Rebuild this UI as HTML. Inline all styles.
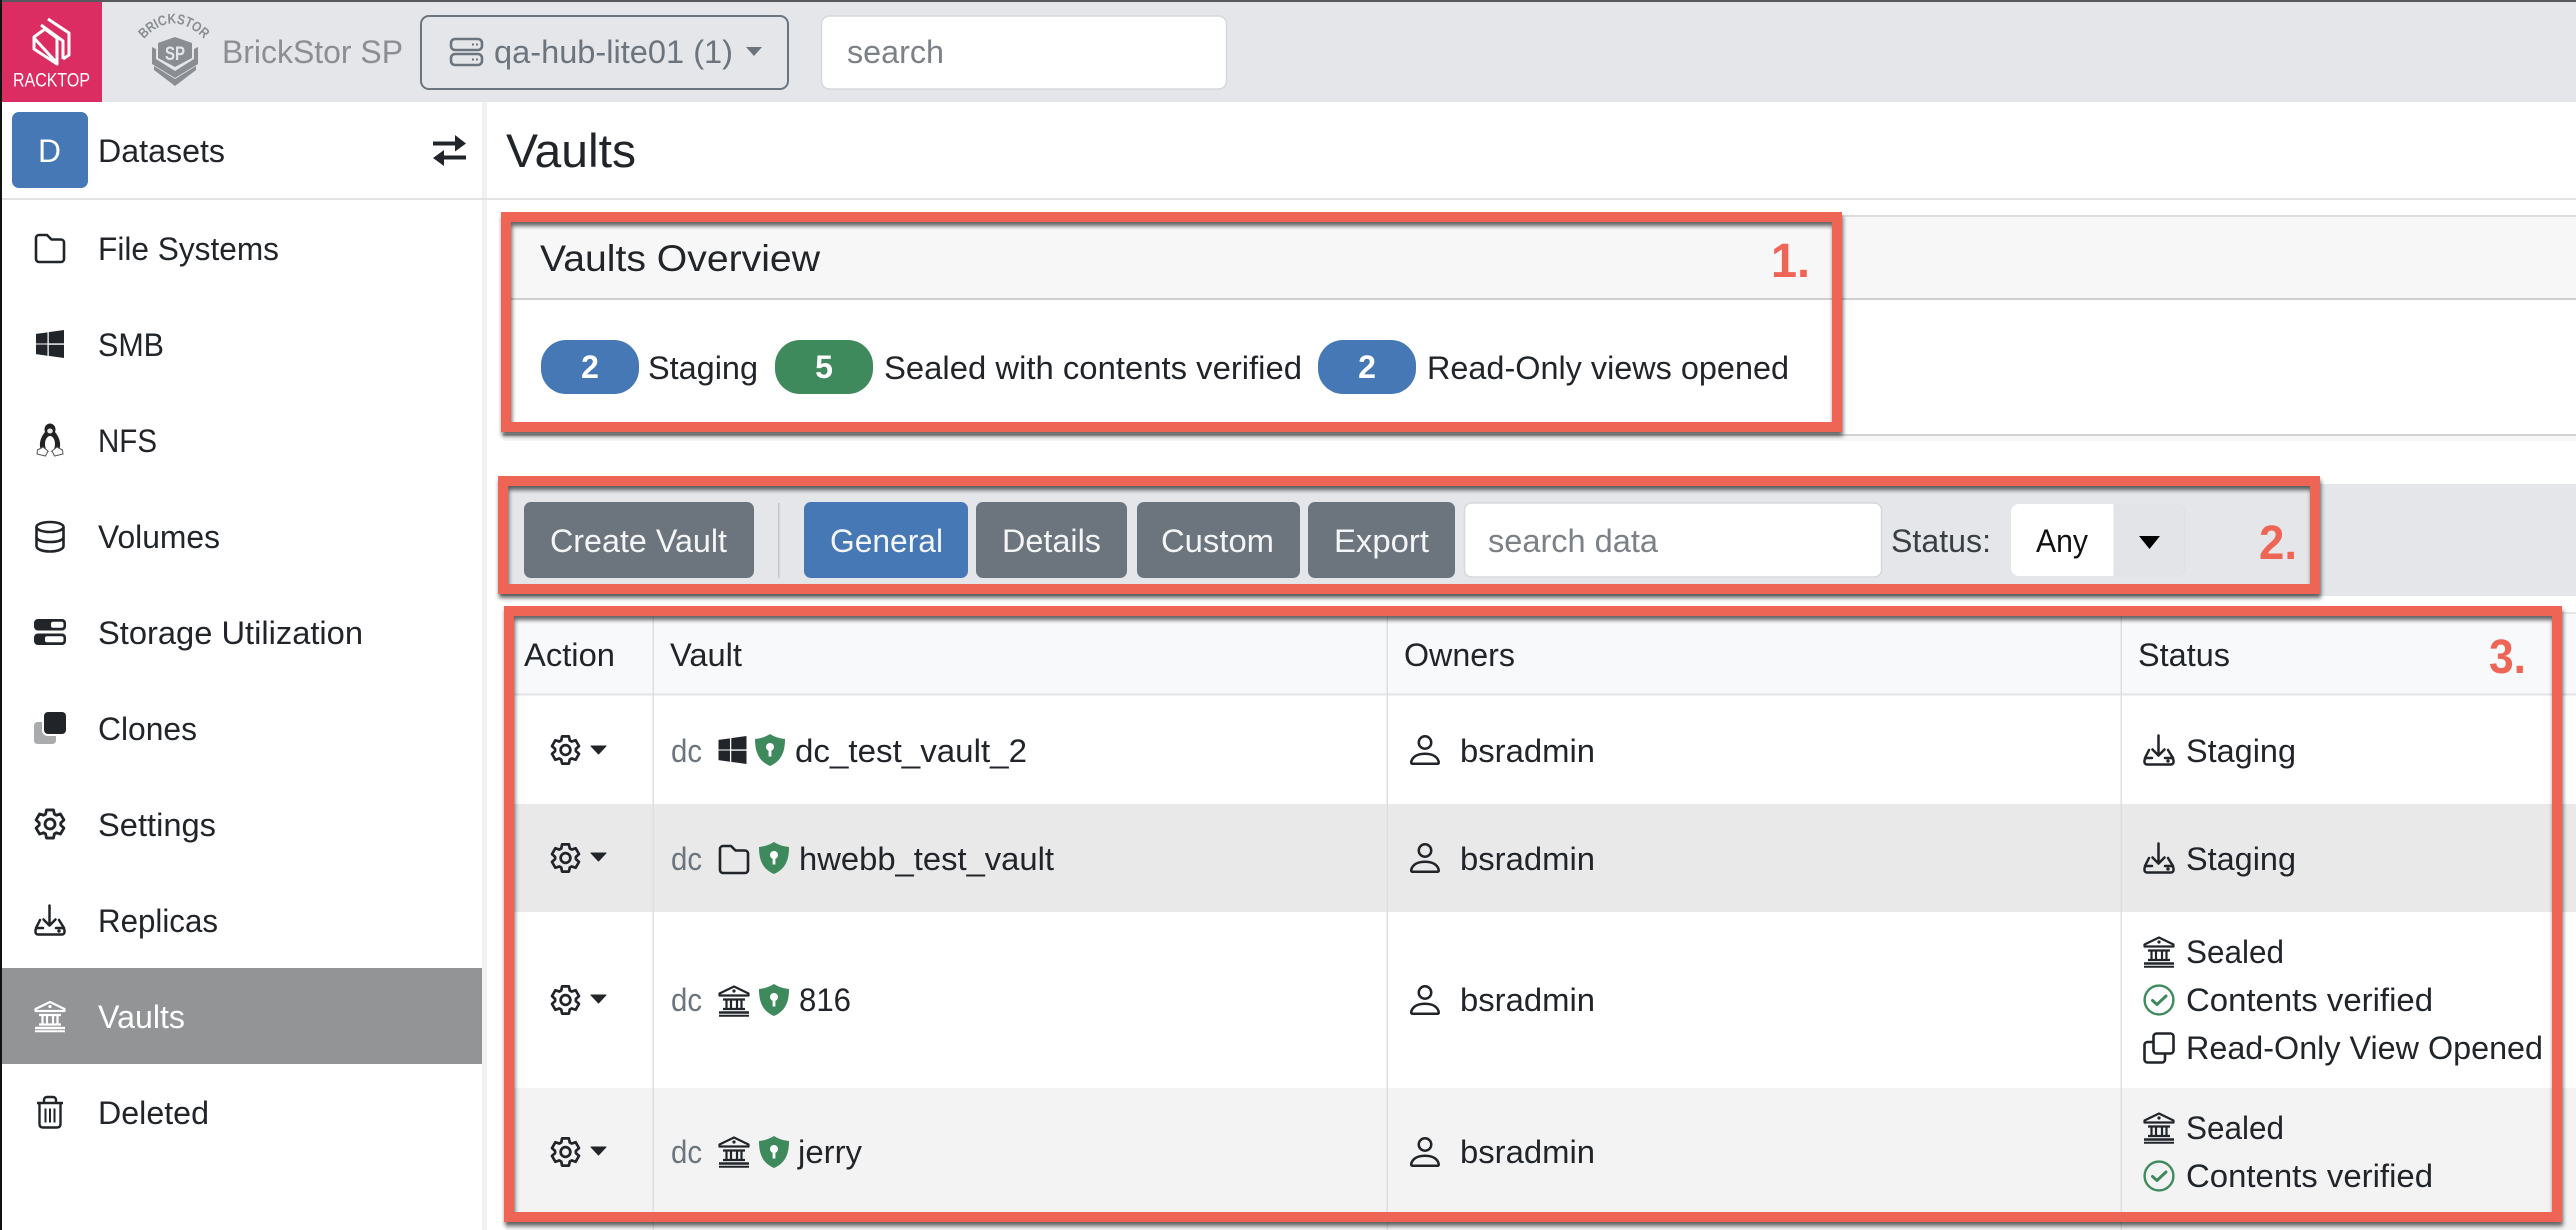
<!DOCTYPE html>
<html lang="en">
<head>
<meta charset="utf-8">
<title>Vaults - BrickStor SP</title>
<style>
html,body{margin:0;padding:0;width:2576px;height:1230px;overflow:hidden;background:#fff}
svg.page{display:block;position:absolute;left:0;top:0}
text{font-family:"Liberation Sans",sans-serif;font-size:32px;fill:#212529}
.w{fill:#fff}.m{fill:#6c757d}.ph{fill:#7b8187}.h{fill:#8b8e92}.wb{fill:#fff;font-weight:700}
.num{fill:#ee6555;font-weight:700;font-size:48px}
</style>
</head>
<body>
<svg class="page" xmlns="http://www.w3.org/2000/svg" width="2576" height="1230" viewBox="0 0 2576 1230">
<defs>
<symbol id="folder" viewBox="0 0 32 32"><path fill="none" stroke="currentColor" stroke-width="2.600" stroke-linejoin="round" d="M2 27V6A3 3 0 0 1 5 3H13L17.500 7.500H27A3 3 0 0 1 30 10.500V27A3 3 0 0 1 27 30H5A3 3 0 0 1 2 27Z"/></symbol>
<symbol id="win" viewBox="0 0 16 16"><path fill="currentColor" d="M6.555 1.375 0 2.237v5.45h6.555V1.375zM0 13.795l6.555.933V8.313H0v5.482zm7.278-5.4.026 6.378L16 16V8.395H7.278zM16 0 7.3 1.244v6.414H16V0z"/></symbol>
<symbol id="person" viewBox="0 0 16 16"><path fill="currentColor" d="M8 8a3 3 0 1 0 0-6 3 3 0 0 0 0 6Zm2-3a2 2 0 1 1-4 0 2 2 0 0 1 4 0Zm4 8c0 1-1 1-1 1H3s-1 0-1-1 1-4 6-4 6 3 6 4Zm-1-.004c-.001-.246-.154-.986-.832-1.664C11.516 10.68 10.289 10 8 10c-2.29 0-3.516.68-4.168 1.332-.678.678-.83 1.418-.832 1.664h10Z"/></symbol>
<symbol id="gear" viewBox="0 0 32 32"><g fill="none" stroke="currentColor" stroke-width="2.800" stroke-linejoin="round"><path d="M11.600 6.130 12.490 1.930H19.510L20.390 6.130 22.350 7.260 26.430 5.920 29.940 12 26.740 14.870V17.130L29.940 20 26.430 26.080 22.350 24.740 20.390 25.870 19.510 30.070H12.490L11.600 25.870 9.650 24.740 5.570 26.080 2.060 20 5.260 17.130V14.870L2.060 12 5.570 5.920 9.650 7.260Z"/><circle cx="16" cy="16" r="5"/></g></symbol>
<symbol id="bank" viewBox="0 0 32 32"><g fill="none" stroke="currentColor" stroke-width="2.200"><path d="M16 1.500 30.500 8.500V10.500H1.500V8.500Z" stroke-linejoin="round"/><path d="M5 14.500H27M5 24H27M8.500 15V24M13 15V24M19 15V24M23.500 15V24"/><path d="M1 27.500H31" stroke-width="2.600"/><path d="M1 30.800H31" stroke-width="2"/></g><circle cx="16" cy="6" r="1.600" fill="currentColor"/></symbol>
<symbol id="dl" viewBox="0 0 32 32"><g fill="none" stroke="currentColor" stroke-width="2.500" stroke-linecap="round" stroke-linejoin="round"><path d="M15.500 1.500V21.500M9.500 15.500 15.500 21.500 21.500 15.500"/><path d="M9 24H4A2.500 2.500 0 0 0 1.500 26.500V28A2.500 2.500 0 0 0 4 30.500H28A2.500 2.500 0 0 0 30.500 28V26.500A2.500 2.500 0 0 0 28 24H22"/><path d="M6 16 2 24M25 16 30 24"/></g><circle cx="25" cy="27" r="1.700" fill="currentColor"/></symbol>
<symbol id="check" viewBox="0 0 32 32"><circle cx="16" cy="16" r="14.400" fill="none" stroke="#3f8a5c" stroke-width="2.400"/><path d="M9.500 16.500 14 20.500 23 12" fill="none" stroke="#3f8a5c" stroke-width="3" stroke-linecap="round" stroke-linejoin="round"/></symbol>
<symbol id="copy" viewBox="0 0 32 32"><g fill="none" stroke="currentColor" stroke-width="2.600"><rect x="10.500" y="1.500" width="20" height="20" rx="3"/><path d="M10 10H4.500A3 3 0 0 0 1.500 13V27.500A3 3 0 0 0 4.500 30.500H19A3 3 0 0 0 22 27.500V22"/></g></symbol>
<symbol id="shield" viewBox="0 0 30 32"><path fill="#3f8a5c" d="M15 0C10.500 3 5 4.500 0 5 0 18 3.500 27 15 32 26.500 27 30 18 30 5 25 4.500 19.500 3 15 0Z"/><circle cx="15" cy="13" r="4" fill="#fff"/><path d="M13.600 14H16.400V22.500H13.600Z" fill="#fff"/></symbol>
<symbol id="caret" viewBox="0 0 17 10"><path fill="currentColor" stroke="currentColor" stroke-width="1" stroke-linejoin="round" d="M1 1H16L8.500 9Z"/></symbol>
</defs>

<!-- page background -->
<rect width="2576" height="1230" fill="#fff"/>

<!-- top bar -->
<rect x="0" y="0" width="2576" height="102" fill="#e4e6ea"/>
<rect x="0" y="0" width="2576" height="2" fill="#55585c"/>
<rect x="2" y="2" width="100" height="100" fill="#dc2d62"/>
<g fill="none" stroke="#fff" stroke-width="3" stroke-linejoin="round">
<path d="M48 19 69 33V55L63 59"/>
<path d="M57 38V64L34 49V37L45 29Z"/>
<path d="M34 38 56 62"/>
<path d="M41 25 63 41V59"/>
</g>
<text x="13" y="86.500" class="w" style="font-size:19px" textLength="77" lengthAdjust="spacingAndGlyphs">RACKTOP</text>

<!-- brickstor logo -->
<path id="arc" d="M143 40Q174 6 207 42" fill="none"/>
<text style="font-size:14px;font-weight:700;fill:#8a8e92" textLength="70" lengthAdjust="spacingAndGlyphs"><textPath href="#arc" startOffset="1">BRICKSTOR</textPath></text>
<g fill="#8a8e92">
<path d="M175 37 192 43V58L175 67 158 58V43Z"/>
<path d="M152 47 156 49V59L175 71 194 59V49L198 47V64L175 78 152 64Z"/>
<path d="M154 66 175 79 196 66V70L175 86 154 70Z"/>
</g>
<text x="175" y="60" text-anchor="middle" style="font-size:19px;font-weight:700;fill:#e4e6ea" textLength="20" lengthAdjust="spacingAndGlyphs">SP</text>
<text x="222" y="63" class="h" textLength="181" lengthAdjust="spacingAndGlyphs">BrickStor SP</text>

<!-- hub dropdown -->
<rect x="421" y="16" width="367" height="73" rx="8" fill="none" stroke="#6c757d" stroke-width="2"/>
<g fill="none" stroke="#6c757d" stroke-width="2.600">
<rect x="451" y="39" width="31" height="11" rx="4"/>
<rect x="451" y="54" width="31" height="11" rx="4"/>
</g>
<path d="M472 44.500h6M472 59.500h6" stroke="#6c757d" stroke-width="2" stroke-dasharray="2 2"/>
<text x="494" y="63" class="m" textLength="239" lengthAdjust="spacingAndGlyphs">qa-hub-lite01 (1)</text>
<path d="M746 47H762L754 56Z" fill="#6c757d"/>

<!-- global search -->
<rect x="821.500" y="16" width="405" height="73" rx="8" fill="#fff" stroke="#d5d8dc" stroke-width="1.500"/>
<text x="847" y="63" class="ph" textLength="97" lengthAdjust="spacingAndGlyphs">search</text>

<!-- sidebar -->
<rect x="482" y="102" width="5" height="1128" fill="#f1f1f2"/>
<rect x="0" y="198" width="2576" height="2" fill="#e3e3e4"/>
<rect x="0" y="0" width="2" height="1230" fill="#111"/>
<rect x="12" y="112" width="76" height="76" rx="7" fill="#4578b4"/>
<text x="38" y="162" class="w" style="font-size:32px" textLength="23" lengthAdjust="spacingAndGlyphs">D</text>
<text x="98" y="162" textLength="127" lengthAdjust="spacingAndGlyphs">Datasets</text>
<g fill="#212529">
<path d="M433 141.500H455V135L466 143.500 455 151.500V145.500H433Z"/>
<path d="M466 155.500H444V150L433 158 444 166V159.500H466Z"/>
</g>

<rect x="2" y="968" width="480" height="96" fill="#939496"/>
<g color="#212529">
<use href="#folder" x="34" y="232" width="32" height="32"/>
<use href="#win" x="36" y="330" width="28" height="28"/>
<!-- penguin -->
<g>
<path d="M45 432C40 438 38 446 42 452H58C62 446 60 438 55 432Z" fill="#222"/>
<ellipse cx="50" cy="444" rx="5" ry="8" fill="#fff"/>
<ellipse cx="50" cy="429.500" rx="5.500" ry="6" fill="#222"/>
<ellipse cx="50" cy="431" rx="2.800" ry="2.500" fill="#e8e8e8"/>
<path d="M43 447 37.500 450 37 454 45.500 456 48 451Z" fill="#fff" stroke="#555" stroke-width="1"/>
<path d="M57 447 62.500 450 63 454 54.500 456 52 451Z" fill="#fff" stroke="#555" stroke-width="1"/>
</g>
<!-- volumes -->
<g fill="none" stroke="#212529" stroke-width="2.600">
<ellipse cx="50" cy="527" rx="13.500" ry="5"/>
<path d="M36.500 527V546C36.500 549 42 551.500 50 551.500S63.500 549 63.500 546V527"/>
<path d="M36.500 537C36.500 540 42 542 50 542S63.500 540 63.500 537"/>
</g>
<!-- storage util -->
<rect x="34" y="619" width="32" height="11.500" rx="4" fill="#212529"/>
<rect x="34" y="633.500" width="32" height="11.500" rx="4" fill="#212529"/>
<rect x="51" y="621.800" width="12.500" height="6" rx="2" fill="#fff"/>
<rect x="45" y="636.300" width="18.500" height="6" rx="2" fill="#fff"/>
<!-- clones -->
<rect x="34" y="722" width="22" height="22" rx="3.500" fill="#aaabad"/>
<rect x="43" y="711" width="24" height="24" rx="5" fill="#212529" stroke="#fff" stroke-width="2"/>
<use href="#gear" x="34" y="808" width="32" height="32"/>
<use href="#dl" x="34" y="904" width="32" height="32"/>
<use href="#bank" x="34" y="1000" width="32" height="33" style="color:#fff"/>
<!-- trash -->
<g fill="none" stroke="#212529" stroke-width="2.400" stroke-linejoin="round">
<path d="M37 1103H63"/>
<path d="M44 1103V1100C44 1098 45.500 1097 47 1097H53C54.500 1097 56 1098 56 1100V1103"/>
<path d="M39.500 1103V1124C39.500 1126.500 41 1127.500 43 1127.500H57C59 1127.500 60.500 1126.500 60.500 1124V1103"/>
<path d="M45.500 1108.500V1122.500M50 1108.500V1122.500M54.500 1108.500V1122.500" stroke-width="2"/>
</g>
</g>
<text x="98" y="260" textLength="181" lengthAdjust="spacingAndGlyphs">File Systems</text>
<text x="98" y="356" textLength="66" lengthAdjust="spacingAndGlyphs">SMB</text>
<text x="98" y="452" textLength="59" lengthAdjust="spacingAndGlyphs">NFS</text>
<text x="98" y="548" textLength="122" lengthAdjust="spacingAndGlyphs">Volumes</text>
<text x="98" y="644" textLength="265" lengthAdjust="spacingAndGlyphs">Storage Utilization</text>
<text x="98" y="740" textLength="99" lengthAdjust="spacingAndGlyphs">Clones</text>
<text x="98" y="836" textLength="118" lengthAdjust="spacingAndGlyphs">Settings</text>
<text x="98" y="932" textLength="120" lengthAdjust="spacingAndGlyphs">Replicas</text>
<text x="98" y="1028" class="w" textLength="87" lengthAdjust="spacingAndGlyphs">Vaults</text>
<text x="98" y="1124" textLength="111" lengthAdjust="spacingAndGlyphs">Deleted</text>

<!-- main -->
<text x="506" y="167" style="font-size:47px" textLength="130" lengthAdjust="spacingAndGlyphs">Vaults</text>

<!-- overview card -->
<rect x="503" y="216" width="2073" height="83" fill="#f7f7f7"/>
<rect x="503" y="215" width="2073" height="2" fill="#dedede"/>
<rect x="503" y="298" width="2073" height="2" fill="#cfcfcf"/>
<rect x="503" y="434" width="2073" height="2" fill="#d2d2d2"/>
<rect x="503" y="436" width="2073" height="5" fill="#f7f7f7"/>
<text x="540" y="271" style="font-size:37px" textLength="280" lengthAdjust="spacingAndGlyphs">Vaults Overview</text>
<rect x="541" y="340" width="98" height="54" rx="25" fill="#4578b4"/>
<text x="590" y="378" text-anchor="middle" class="wb">2</text>
<text x="648" y="379" textLength="110" lengthAdjust="spacingAndGlyphs">Staging</text>
<rect x="775" y="340" width="98" height="54" rx="25" fill="#3f8a5c"/>
<text x="824" y="378" text-anchor="middle" class="wb">5</text>
<text x="884" y="379" textLength="418" lengthAdjust="spacingAndGlyphs">Sealed with contents verified</text>
<rect x="1318" y="340" width="98" height="54" rx="25" fill="#4578b4"/>
<text x="1367" y="378" text-anchor="middle" class="wb">2</text>
<text x="1427" y="379" textLength="362" lengthAdjust="spacingAndGlyphs">Read-Only views opened</text>

<!-- toolbar -->
<rect x="500" y="484" width="2076" height="112" fill="#e4e6ea"/>
<rect x="524" y="502" width="230" height="76" rx="7" fill="#6c757d"/>
<text x="550" y="552" style="fill:#f4f5f6" textLength="177" lengthAdjust="spacingAndGlyphs">Create Vault</text>
<rect x="778" y="503" width="1.500" height="75" fill="#c3c6ca"/>
<rect x="804" y="502" width="164" height="76" rx="7" fill="#4578b4"/>
<text x="830" y="552" style="fill:#f4f5f6" textLength="113" lengthAdjust="spacingAndGlyphs">General</text>
<rect x="976" y="502" width="151" height="76" rx="7" fill="#6c757d"/>
<text x="1002" y="552" style="fill:#f4f5f6" textLength="99" lengthAdjust="spacingAndGlyphs">Details</text>
<rect x="1137" y="502" width="163" height="76" rx="7" fill="#6c757d"/>
<text x="1161" y="552" style="fill:#f4f5f6" textLength="113" lengthAdjust="spacingAndGlyphs">Custom</text>
<rect x="1308" y="502" width="147" height="76" rx="7" fill="#6c757d"/>
<text x="1334" y="552" style="fill:#f4f5f6" textLength="95" lengthAdjust="spacingAndGlyphs">Export</text>
<rect x="1464.500" y="503" width="417" height="74" rx="7" fill="#fff" stroke="#d5d8dc" stroke-width="1.500"/>
<text x="1488" y="552" class="ph" textLength="170" lengthAdjust="spacingAndGlyphs">search data</text>
<text x="1891" y="552" style="fill:#3a3f44" textLength="100" lengthAdjust="spacingAndGlyphs">Status:</text>
<path d="M2019 504H2114V576H2019A8 8 0 0 1 2011 568V512A8 8 0 0 1 2019 504Z" fill="#fff"/>
<path d="M2114 504H2177A8 8 0 0 1 2185 512V568A8 8 0 0 1 2177 576H2114Z" fill="#e2e4e8" stroke="#dfe1e5"/>
<text x="2036" y="552" style="fill:#111" textLength="52" lengthAdjust="spacingAndGlyphs">Any</text>
<path d="M2139 536H2160L2149.500 549Z" fill="#000"/>

<!-- table -->
<rect x="506" y="613" width="2070" height="82" fill="#f8f9fa"/>
<rect x="506" y="612" width="2070" height="2" fill="#e6e7e8"/>
<rect x="506" y="693.500" width="2070" height="2" fill="#e2e4e7"/>
<rect x="506" y="804" width="2070" height="108" fill="#e9e9e9"/>
<rect x="506" y="1088" width="2070" height="142" fill="#f3f3f4"/>
<g fill="#dcdfe2">
<rect x="652.500" y="613" width="1.500" height="617"/>
<rect x="1386.500" y="613" width="1.500" height="617"/>
<rect x="2120.500" y="613" width="1.500" height="617"/>
</g>
<text x="524" y="666" textLength="91" lengthAdjust="spacingAndGlyphs">Action</text>
<text x="670" y="666" textLength="72" lengthAdjust="spacingAndGlyphs">Vault</text>
<text x="1404" y="666" textLength="111" lengthAdjust="spacingAndGlyphs">Owners</text>
<text x="2138" y="666" textLength="92" lengthAdjust="spacingAndGlyphs">Status</text>

<!-- action cells -->
<g color="#212529">
<use href="#gear" x="550" y="734" width="31" height="32"/>
<use href="#caret" x="590" y="745" width="17" height="10"/>
<use href="#gear" x="550" y="842" width="31" height="32"/>
<use href="#caret" x="590" y="852" width="17" height="10"/>
<use href="#gear" x="550" y="984" width="31" height="32"/>
<use href="#caret" x="590" y="994" width="17" height="10"/>
<use href="#gear" x="550" y="1136" width="31" height="32"/>
<use href="#caret" x="590" y="1146" width="17" height="10"/>

<use href="#win" x="718" y="736" width="29" height="28"/>
<use href="#folder" x="718" y="843" width="32" height="32"/>
<use href="#bank" x="718" y="985" width="32" height="32"/>
<use href="#bank" x="718" y="1136" width="32" height="32"/>

<use href="#person" x="1405" y="730" width="40" height="40"/>
<use href="#person" x="1405" y="838" width="40" height="40"/>
<use href="#person" x="1405" y="980" width="40" height="40"/>
<use href="#person" x="1405" y="1132" width="40" height="40"/>

<use href="#dl" x="2143" y="734" width="32" height="32"/>
<use href="#dl" x="2143" y="842" width="32" height="32"/>
<use href="#bank" x="2143" y="936" width="32" height="32"/>
<use href="#check" x="2143" y="984" width="32" height="32"/>
<use href="#copy" x="2143" y="1032" width="32" height="32"/>
<use href="#bank" x="2143" y="1112" width="32" height="32"/>
<use href="#check" x="2143" y="1160" width="32" height="32"/>
</g>
<use href="#shield" x="755" y="734" width="30" height="32"/>
<use href="#shield" x="759" y="842" width="30" height="32"/>
<use href="#shield" x="759" y="984" width="30" height="32"/>
<use href="#shield" x="759" y="1136" width="30" height="32"/>

<text x="671" y="762" class="m" textLength="31" lengthAdjust="spacingAndGlyphs">dc</text>
<text x="795" y="762" textLength="232" lengthAdjust="spacingAndGlyphs">dc_test_vault_2</text>
<text x="671" y="870" class="m" textLength="31" lengthAdjust="spacingAndGlyphs">dc</text>
<text x="799" y="870" textLength="255" lengthAdjust="spacingAndGlyphs">hwebb_test_vault</text>
<text x="671" y="1011" class="m" textLength="31" lengthAdjust="spacingAndGlyphs">dc</text>
<text x="799" y="1011" textLength="52" lengthAdjust="spacingAndGlyphs">816</text>
<text x="671" y="1163" class="m" textLength="31" lengthAdjust="spacingAndGlyphs">dc</text>
<text x="798" y="1163" textLength="64" lengthAdjust="spacingAndGlyphs">jerry</text>

<text x="1460" y="762" textLength="135" lengthAdjust="spacingAndGlyphs">bsradmin</text>
<text x="1460" y="870" textLength="135" lengthAdjust="spacingAndGlyphs">bsradmin</text>
<text x="1460" y="1011" textLength="135" lengthAdjust="spacingAndGlyphs">bsradmin</text>
<text x="1460" y="1163" textLength="135" lengthAdjust="spacingAndGlyphs">bsradmin</text>

<text x="2186" y="762" textLength="110" lengthAdjust="spacingAndGlyphs">Staging</text>
<text x="2186" y="870" textLength="110" lengthAdjust="spacingAndGlyphs">Staging</text>
<text x="2186" y="963" textLength="98" lengthAdjust="spacingAndGlyphs">Sealed</text>
<text x="2186" y="1011" textLength="247" lengthAdjust="spacingAndGlyphs">Contents verified</text>
<text x="2186" y="1059" textLength="357" lengthAdjust="spacingAndGlyphs">Read-Only View Opened</text>
<text x="2186" y="1139" textLength="98" lengthAdjust="spacingAndGlyphs">Sealed</text>
<text x="2186" y="1187" textLength="247" lengthAdjust="spacingAndGlyphs">Contents verified</text>

<!-- annotation boxes -->
<g style="filter:drop-shadow(1px 4px 2px rgba(0,0,0,.6))" fill="none" stroke="#ee6555" stroke-width="10">
<rect x="506" y="217" width="1331" height="210"/>
<rect x="503" y="481" width="1812" height="108"/>
<rect x="509" y="611" width="2048" height="606"/>
</g>
<text x="1771" y="277" class="num" textLength="39" lengthAdjust="spacingAndGlyphs">1.</text>
<text x="2259" y="559" class="num" textLength="38" lengthAdjust="spacingAndGlyphs">2.</text>
<text x="2489" y="673" class="num" textLength="37" lengthAdjust="spacingAndGlyphs">3.</text>
</svg>
</body>
</html>
